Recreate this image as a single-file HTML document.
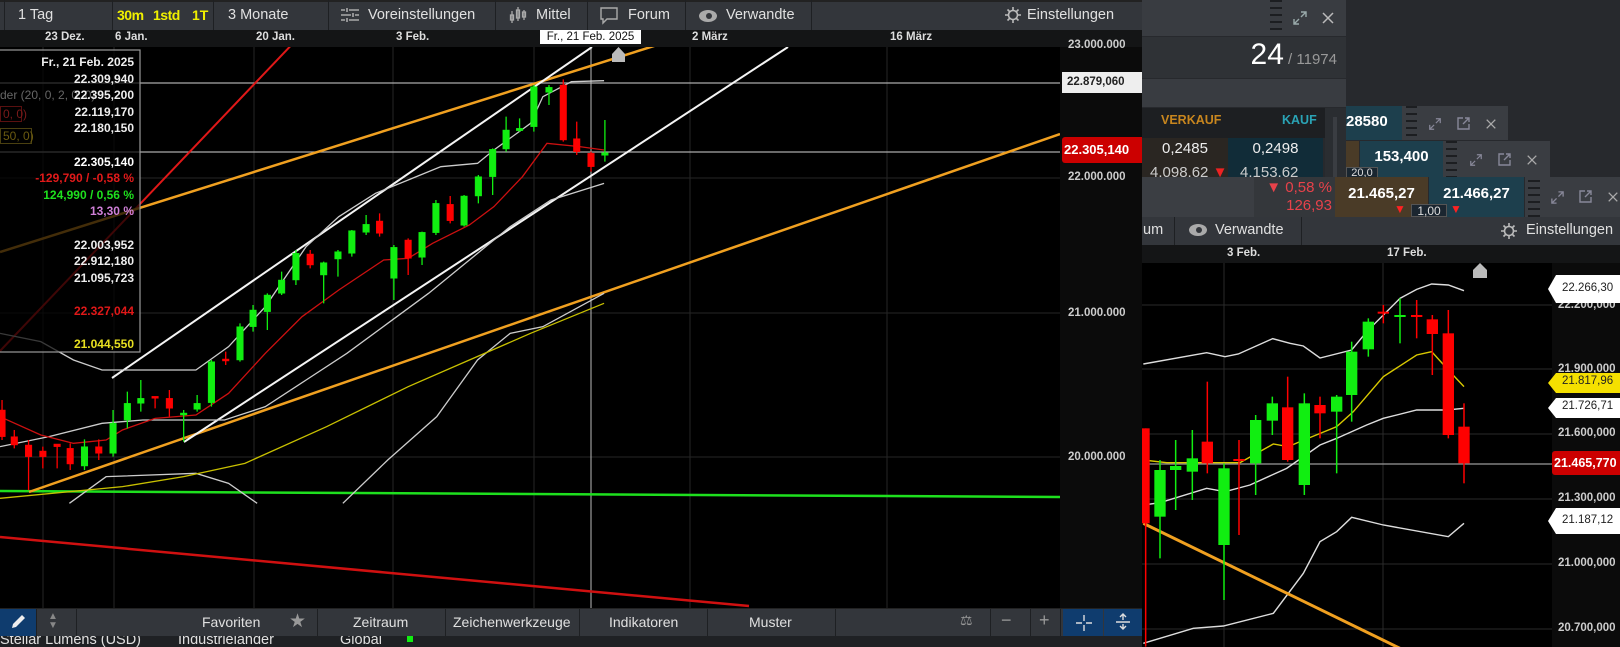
<!DOCTYPE html>
<html><head><meta charset="utf-8"><style>
*{margin:0;padding:0;box-sizing:border-box}
body{width:1620px;height:647px;overflow:hidden;background:#27292d;font-family:"Liberation Sans",Arial,sans-serif;position:relative;color:#ddd}
.a{position:absolute;white-space:nowrap}
.tb{background:#33363b}
.sep{position:absolute;top:0;width:1px;background:#1e2023}
.t14{font-size:14.5px;color:#e0e0e0}
.lbl{font-size:11.5px;color:#ddd;font-weight:bold}
</style></head><body>

<!-- ===== Right background panels ===== -->
<div class="a" style="left:1142px;top:0;width:204px;height:36px;background:#393c41"></div>
<div class="a" style="left:1270px;top:0;width:12px;height:30px;background:repeating-linear-gradient(#1c1e21 0 2px,#393c41 2px 7px)"></div>
<svg class="a" style="left:1292px;top:10px" width="16" height="16" viewBox="0 0 16 16" fill="none" stroke="#9aa" stroke-width="1.4"><path d="M9 2h5v5M14 2l-5 5M7 14H2V9M2 14l5-5"/></svg>
<svg class="a" style="left:1321px;top:11px" width="14" height="14" viewBox="0 0 14 14" stroke="#bbb" stroke-width="1.5"><path d="M2 2l10 10M12 2L2 12"/></svg>
<div class="a" style="left:1142px;top:37px;width:204px;height:41px;background:#2f3236"></div>
<div class="a" style="left:1205px;top:38px;width:132px;text-align:right;color:#fff"><span style="font-size:30px">24</span><span style="font-size:15px;color:#999"> / 11974</span></div>
<div class="a" style="left:1142px;top:79px;width:204px;height:28px;background:#393c41"></div>
<div class="a" style="left:1142px;top:108px;width:183px;height:30px;background:#1d1f22"></div>
<div class="a" style="left:1161px;top:113px;font-size:12.5px;font-weight:bold;color:#c8861e">VERKAUF</div>
<div class="a" style="left:1282px;top:113px;font-size:12.5px;font-weight:bold;color:#2aa3b5">KAUF</div>
<div class="a" style="left:1325px;top:108px;width:21px;height:70px;background:#2a2d31"></div>
<div class="a" style="left:1333px;top:117px;width:4px;height:60px;background:#3a3d42"></div>
<div class="a" style="left:1142px;top:138px;width:86px;height:40px;background:#2a2622"></div>
<div class="a" style="left:1228px;top:138px;width:95px;height:40px;background:#112c38"></div>
<div class="a" style="left:1142px;top:140px;width:86px;text-align:center;font-size:15px;color:#eee">0,2485</div>
<div class="a" style="left:1228px;top:140px;width:95px;text-align:center;font-size:15px;color:#eee">0,2498</div>
<div class="a" style="left:1150px;top:164px;font-size:15px;color:#ccc">4.098,62 <span style="color:#e22">▼</span></div>
<div class="a" style="left:1240px;top:164px;font-size:15px;color:#ccc">4.153,62</div>

<!-- panel B -->
<div class="a" style="left:1346px;top:106px;width:56px;height:34px;background:#1d3f4d;font-size:15px;font-weight:bold;color:#fff;padding:7px 0 0 0">28580</div>
<div class="a" style="left:1402px;top:106px;width:106px;height:34px;background:#3a3d42"></div>
<div class="a" style="left:1406px;top:106px;width:11px;height:34px;background:repeating-linear-gradient(#1c1e21 0 2px,#3a3d42 2px 7px)"></div>
<svg class="a" style="left:1428px;top:117px" width="14" height="14" viewBox="0 0 16 16" fill="none" stroke="#889" stroke-width="1.4"><path d="M9 2h5v5M14 2l-5 5M7 14H2V9M2 14l5-5"/></svg>
<svg class="a" style="left:1457px;top:117px" width="13" height="13" viewBox="0 0 13 13" fill="none" stroke="#889" stroke-width="1.4"><path d="M6 1H1v11h11V7M8 1h4v4M12 1L6 7"/></svg>
<svg class="a" style="left:1485px;top:118px" width="12" height="12" viewBox="0 0 14 14" stroke="#aaa" stroke-width="1.5"><path d="M2 2l10 10M12 2L2 12"/></svg>
<!-- panel C -->
<div class="a" style="left:1346px;top:141px;width:13px;height:36px;background:#4a3b27"></div>
<div class="a" style="left:1360px;top:141px;width:83px;height:36px;background:#1d3f4d;font-size:15px;font-weight:bold;color:#fff;text-align:center;padding-top:7px">153,400</div>
<div class="a" style="left:1346px;top:167px;width:32px;height:11px;background:#1a2630;border:1px solid #555;font-size:11px;line-height:11px;color:#ddd;text-align:center;overflow:hidden">20,0</div>
<div class="a" style="left:1443px;top:141px;width:107px;height:36px;background:#3a3d42"></div>
<div class="a" style="left:1446px;top:141px;width:11px;height:36px;background:repeating-linear-gradient(#1c1e21 0 2px,#3a3d42 2px 7px)"></div>
<svg class="a" style="left:1469px;top:153px" width="14" height="14" viewBox="0 0 16 16" fill="none" stroke="#889" stroke-width="1.4"><path d="M9 2h5v5M14 2l-5 5M7 14H2V9M2 14l5-5"/></svg>
<svg class="a" style="left:1498px;top:153px" width="13" height="13" viewBox="0 0 13 13" fill="none" stroke="#889" stroke-width="1.4"><path d="M6 1H1v11h11V7M8 1h4v4M12 1L6 7"/></svg>
<svg class="a" style="left:1526px;top:154px" width="12" height="12" viewBox="0 0 14 14" stroke="#aaa" stroke-width="1.5"><path d="M2 2l10 10M12 2L2 12"/></svg>
<!-- panel D -->
<div class="a" style="left:1142px;top:177px;width:112px;height:40px;background:#3b3e43"></div>
<div class="a" style="left:1254px;top:177px;width:81px;height:40px;background:#34373b"></div>
<div class="a" style="left:1256px;top:179px;width:76px;text-align:right;font-size:15px;color:#e8424a;line-height:18px">▼ 0,58 %<br>126,93</div>
<div class="a" style="left:1335px;top:177px;width:93px;height:40px;background:#4a3b27;font-size:15px;font-weight:bold;color:#fff;text-align:center;padding-top:8px">21.465,27</div>
<div class="a" style="left:1429px;top:177px;width:95px;height:40px;background:#1d3f4d;font-size:15px;font-weight:bold;color:#fff;text-align:center;padding-top:8px">21.466,27</div>
<div class="a" style="left:1394px;top:202px;color:#f22;font-size:12px">▼</div>
<div class="a" style="left:1450px;top:202px;color:#f22;font-size:12px">▼</div>
<div class="a" style="left:1411px;top:204px;width:36px;height:13px;background:#1b2630;border:1px solid #555;font-size:12px;line-height:12px;color:#ddd;text-align:center">1,00</div>
<div class="a" style="left:1525px;top:177px;width:95px;height:40px;background:#3a3d42"></div>
<div class="a" style="left:1528px;top:180px;width:12px;height:37px;background:repeating-linear-gradient(#1c1e21 0 2px,#3a3d42 2px 7px)"></div>
<svg class="a" style="left:1550px;top:190px" width="15" height="15" viewBox="0 0 16 16" fill="none" stroke="#889" stroke-width="1.4"><path d="M9 2h5v5M14 2l-5 5M7 14H2V9M2 14l5-5"/></svg>
<svg class="a" style="left:1579px;top:190px" width="13" height="13" viewBox="0 0 13 13" fill="none" stroke="#889" stroke-width="1.4"><path d="M6 1H1v11h11V7M8 1h4v4M12 1L6 7"/></svg>
<svg class="a" style="left:1607px;top:191px" width="12" height="12" viewBox="0 0 14 14" stroke="#aaa" stroke-width="1.5"><path d="M2 2l10 10M12 2L2 12"/></svg>

<!-- second chart toolbar -->
<div class="a tb" style="left:1142px;top:217px;width:478px;height:28px"></div>
<div class="sep" style="left:1174px;top:217px;height:28px"></div>
<div class="sep" style="left:1301px;top:217px;height:28px"></div>
<div class="a t14" style="left:1143px;top:222px">um</div>
<svg class="a" style="left:1188px;top:223px" width="20" height="14" viewBox="0 0 20 14"><ellipse cx="10" cy="7" rx="9" ry="6" fill="#aaa"/><circle cx="11" cy="7" r="3" fill="#33363b"/></svg>
<div class="a t14" style="left:1215px;top:222px">Verwandte</div>
<svg class="a" style="left:1500px;top:222px" width="18" height="18" viewBox="0 0 18 18" fill="none" stroke="#bbb" stroke-width="1.6"><circle cx="9" cy="9" r="4.5"/><path d="M9 1v3M9 14v3M1 9h3M14 9h3M3.5 3.5l2 2M12.5 12.5l2 2M3.5 14.5l2-2M12.5 5.5l2-2"/></svg>
<div class="a t14" style="left:1526px;top:222px">Einstellungen</div>
<!-- second chart date axis -->
<div class="a" style="left:1142px;top:245px;width:478px;height:18px;background:#141516"></div>
<div class="a lbl" style="left:1227px;top:247px">3 Feb.</div>
<div class="a lbl" style="left:1387px;top:247px">17 Feb.</div>
<div class="a" style="left:1142px;top:263px;width:410px;height:384px;background:#000"></div>
<div class="a" style="left:1552px;top:263px;width:68px;height:384px;background:#0b0b0b"></div>

<svg class="a" style="left:0;top:0" width="1620" height="647">
<defs><clipPath id="c2"><rect x="1142" y="263" width="410" height="384"/></clipPath></defs>
<g clip-path="url(#c2)">
<g stroke="#2a2a2a" stroke-width="1">
<path d="M1224 263V647M1383 263V647M1142 305H1552M1142 369H1552M1142 434H1552M1142 499H1552M1142 564H1552M1142 629H1552"/></g>
<path d="M1142 464H1552" stroke="#999" stroke-width="1.3"/>
<g transform="translate(1100,230) scale(0.33333)" fill="none" stroke-width="1.4" vector-effect="non-scaling-stroke">
<polyline vector-effect="non-scaling-stroke" stroke="#ddd" points="130,402 320,368 375,380 415,372 518,326 570,340 610,348 660,384 755,360 800,305 900,205 950,178 995,162 1045,165 1092,182"/>
<polyline vector-effect="non-scaling-stroke" stroke="#ddd" points="130,825 180,818 320,775 375,785 450,765 560,715 660,645 710,625 800,585 850,565 950,540 1040,540 1092,535"/>
<polyline vector-effect="non-scaling-stroke" stroke="#ddd" points="130,1240 280,1195 370,1188 520,1150 610,1030 660,935 710,905 755,862 850,885 1045,920 1092,880"/>
<polyline vector-effect="non-scaling-stroke" stroke="#d8c800" points="130,690 200,698 420,698 520,642 565,650 600,635 710,590 760,545 850,440 950,375 995,365 1045,420 1092,470"/>
<line vector-effect="non-scaling-stroke" stroke="#f0a020" stroke-width="3" x1="130" y1="880" x2="900" y2="1255"/>
</g>
<g transform="translate(1100,230) scale(0.33333)">
<g stroke-width="1.5">
<line vector-effect="non-scaling-stroke" stroke="#f00" x1="137" y1="595" x2="137" y2="1250"/><rect x="125" y="595" width="24" height="285" fill="#f00"/>
<line vector-effect="non-scaling-stroke" stroke="#1e1" x1="180" y1="690" x2="180" y2="985"/><rect x="163" y="720" width="34" height="140" fill="#1e1"/>
<line vector-effect="non-scaling-stroke" stroke="#1e1" x1="227" y1="630" x2="227" y2="840"/><rect x="210" y="708" width="34" height="12" fill="#1e1"/>
<line vector-effect="non-scaling-stroke" stroke="#1e1" x1="277" y1="600" x2="277" y2="810"/><rect x="260" y="685" width="34" height="40" fill="#1e1"/>
<line vector-effect="non-scaling-stroke" stroke="#f00" x1="322" y1="455" x2="322" y2="730"/><rect x="305" y="635" width="34" height="65" fill="#f00"/>
<line vector-effect="non-scaling-stroke" stroke="#1e1" x1="372" y1="700" x2="372" y2="1110"/><rect x="355" y="715" width="34" height="230" fill="#1e1"/>
<line vector-effect="non-scaling-stroke" stroke="#f00" x1="417" y1="630" x2="417" y2="915"/><rect x="400" y="687" width="34" height="6" fill="#f00"/>
<line vector-effect="non-scaling-stroke" stroke="#1e1" x1="467" y1="555" x2="467" y2="795"/><rect x="450" y="570" width="34" height="130" fill="#1e1"/>
<line vector-effect="non-scaling-stroke" stroke="#1e1" x1="517" y1="500" x2="517" y2="615"/><rect x="500" y="520" width="34" height="52" fill="#1e1"/>
<line vector-effect="non-scaling-stroke" stroke="#f00" x1="563" y1="440" x2="563" y2="695"/><rect x="546" y="532" width="34" height="158" fill="#f00"/>
<line vector-effect="non-scaling-stroke" stroke="#1e1" x1="613" y1="490" x2="613" y2="795"/><rect x="596" y="520" width="34" height="245" fill="#1e1"/>
<line vector-effect="non-scaling-stroke" stroke="#f00" x1="660" y1="500" x2="660" y2="625"/><rect x="643" y="525" width="34" height="25" fill="#f00"/>
<line vector-effect="non-scaling-stroke" stroke="#1e1" x1="710" y1="495" x2="710" y2="730"/><rect x="693" y="500" width="34" height="45" fill="#1e1"/>
<line vector-effect="non-scaling-stroke" stroke="#1e1" x1="755" y1="335" x2="755" y2="575"/><rect x="738" y="365" width="34" height="130" fill="#1e1"/>
<line vector-effect="non-scaling-stroke" stroke="#1e1" x1="805" y1="265" x2="805" y2="380"/><rect x="788" y="275" width="34" height="83" fill="#1e1"/>
<line vector-effect="non-scaling-stroke" stroke="#f00" x1="850" y1="225" x2="850" y2="280"/><rect x="833" y="245" width="34" height="6" fill="#f00"/>
<line vector-effect="non-scaling-stroke" stroke="#1e1" x1="900" y1="205" x2="900" y2="340"/><rect x="883" y="255" width="34" height="6" fill="#1e1"/>
<line vector-effect="non-scaling-stroke" stroke="#f00" x1="950" y1="210" x2="950" y2="325"/><rect x="933" y="255" width="34" height="6" fill="#f00"/>
<line vector-effect="non-scaling-stroke" stroke="#f00" x1="997" y1="255" x2="997" y2="435"/><rect x="980" y="268" width="34" height="44" fill="#f00"/>
<line vector-effect="non-scaling-stroke" stroke="#f00" x1="1045" y1="240" x2="1045" y2="625"/><rect x="1028" y="310" width="34" height="305" fill="#f00"/>
<line vector-effect="non-scaling-stroke" stroke="#f00" x1="1092" y1="520" x2="1092" y2="760"/><rect x="1075" y="590" width="34" height="110" fill="#f00"/>
</g></g>
<path d="M1473 278V270L1480 263L1487 270V278Z" fill="#bbb"/>
</g>
</svg>
<!-- right axis labels of second chart -->
<div class="a lbl" style="left:1558px;top:299px;color:#ccc">22.200,000</div>
<div class="a lbl" style="left:1558px;top:363px;color:#ccc">21.900,000</div>
<div class="a lbl" style="left:1558px;top:427px;color:#ccc">21.600,000</div>
<div class="a lbl" style="left:1558px;top:492px;color:#ccc">21.300,000</div>
<div class="a lbl" style="left:1558px;top:557px;color:#ccc">21.000,000</div>
<div class="a lbl" style="left:1558px;top:622px;color:#ccc">20.700,000</div>
<svg class="a" style="left:1548px;top:275px" width="72" height="260">
<path d="M0 14L8 0H72V28H8Z" fill="#fff"/>
<path d="M0 108L8 98H72V118H8Z" fill="#f5e000"/>
<path d="M0 133L8 123H72V143H8Z" fill="#fff"/>
<path d="M0 246L8 233H72V259H8Z" fill="#fff"/>
</svg>
<div class="a lbl" style="left:1562px;top:282px;color:#222;font-weight:normal">22.266,30</div>
<div class="a lbl" style="left:1562px;top:375px;color:#222;font-weight:normal">21.817,96</div>
<div class="a lbl" style="left:1562px;top:400px;color:#222;font-weight:normal">21.726,71</div>
<div class="a" style="left:1552px;top:451px;width:68px;height:24px;background:#c00;border-radius:3px 0 0 3px"></div>
<div class="a" style="left:1554px;top:456px;font-size:12.5px;font-weight:bold;color:#fff">21.465,770</div>
<div class="a lbl" style="left:1562px;top:514px;color:#222;font-weight:normal">21.187,12</div>

<!-- ===== Main window ===== -->
<div class="a tb" style="left:0;top:0;width:1142px;height:30px;border-top:2px solid #222"></div>
<div class="sep" style="left:4px;height:30px"></div>
<div class="sep" style="left:112px;height:30px"></div>
<div class="sep" style="left:213px;height:30px"></div>
<div class="sep" style="left:328px;height:30px"></div>
<div class="sep" style="left:495px;height:30px"></div>
<div class="sep" style="left:587px;height:30px"></div>
<div class="sep" style="left:685px;height:30px"></div>
<div class="sep" style="left:811px;height:30px"></div>
<div class="a t14" style="left:18px;top:7px">1 Tag</div>
<div class="a" style="left:117px;top:7px;font-size:14px;font-weight:bold;color:#f0f000;letter-spacing:-0.5px">30m</div>
<div class="a" style="left:153px;top:7px;font-size:14px;font-weight:bold;color:#f0f000;letter-spacing:-0.5px">1std</div>
<div class="a" style="left:192px;top:7px;font-size:14px;font-weight:bold;color:#f0f000">1T</div>
<div class="a t14" style="left:228px;top:7px">3 Monate</div>
<svg class="a" style="left:341px;top:7px" width="18" height="16" viewBox="0 0 18 16" stroke="#aaa" stroke-width="1.6"><path d="M0 3h4M8 3h10M0 8h10M14 8h4M0 13h4M8 13h10M6 1v4M12 6v4M6 11v4"/></svg>
<div class="a t14" style="left:368px;top:7px">Voreinstellungen</div>
<svg class="a" style="left:509px;top:5px" width="18" height="20" viewBox="0 0 18 20" fill="none" stroke="#aaa" stroke-width="1.3"><path d="M3 6v12M9 2v14M15 5v10"/><rect x="1.5" y="10" width="3" height="5"/><rect x="7.5" y="5" width="3" height="8"/><rect x="13.5" y="7" width="3" height="5"/></svg>
<div class="a t14" style="left:536px;top:7px">Mittel</div>
<svg class="a" style="left:600px;top:7px" width="18" height="18" viewBox="0 0 18 18" fill="none" stroke="#aaa" stroke-width="1.4"><path d="M1 1h16v11H7l-4 4v-4H1z"/></svg>
<div class="a t14" style="left:628px;top:7px">Forum</div>
<svg class="a" style="left:698px;top:9px" width="20" height="14" viewBox="0 0 20 14"><ellipse cx="10" cy="7" rx="9" ry="6" fill="#aaa"/><circle cx="11" cy="7" r="3" fill="#33363b"/></svg>
<div class="a t14" style="left:726px;top:7px">Verwandte</div>
<svg class="a" style="left:1004px;top:6px" width="18" height="18" viewBox="0 0 18 18" fill="none" stroke="#bbb" stroke-width="1.6"><circle cx="9" cy="9" r="4.5"/><path d="M9 1v3M9 14v3M1 9h3M14 9h3M3.5 3.5l2 2M12.5 12.5l2 2M3.5 14.5l2-2M12.5 5.5l2-2"/></svg>
<div class="a t14" style="left:1027px;top:7px">Einstellungen</div>

<div class="a" style="left:0;top:30px;width:1142px;height:17px;background:#141516"></div>
<div class="a" style="left:0;top:47px;width:1060px;height:561px;background:#000"></div>
<div class="a" style="left:1060px;top:47px;width:82px;height:561px;background:#0b0b0b"></div>

<svg class="a" style="left:0;top:0" width="1142" height="610">
<defs><clipPath id="c1"><rect x="0" y="47" width="1060" height="561"/></clipPath></defs>
<g clip-path="url(#c1)">
<g stroke="#262626" stroke-width="1"><path d="M43 47V608M114 47V608M254 47V608M393 47V608M534 47V608M690 47V608M887 47V608M0 178H1060M0 313H1060M0 457H1060"/></g>
<path d="M0 83H1060M0 152H1060" stroke="#aaa" stroke-width="1.2"/>
<path d="M591 30V608" stroke="#bbb" stroke-width="1"/>
<line x1="0" y1="491" x2="1060" y2="497" stroke="#1ee01e" stroke-width="2.5"/>
<line x1="0" y1="537" x2="749" y2="606" stroke="#d01010" stroke-width="2.5"/>
<line x1="0" y1="351" x2="300" y2="36" stroke="#e01818" stroke-width="2"/>
<line x1="0" y1="252" x2="800" y2="0" stroke="#f0a020" stroke-width="2.5"/>
<line x1="29" y1="492" x2="1060" y2="134" stroke="#f0a020" stroke-width="2.5"/>
<line x1="112" y1="378" x2="592" y2="47" stroke="#f4f4f4" stroke-width="2"/>
<line x1="184" y1="442" x2="788" y2="47" stroke="#f4f4f4" stroke-width="2"/>
<g transform="translate(0,40) scale(0.40816,0.33333)" fill="none">
<polyline vector-effect="non-scaling-stroke" stroke="#ccc" stroke-width="1.3" points="0,880 100,905 180,960 250,990 480,990 560,920 650,800 750,620 830,530 920,460 1000,420 1080,380 1170,370 1210,330 1300,250 1330,170 1400,125 1480,122"/>
<polyline vector-effect="non-scaling-stroke" stroke="#ccc" stroke-width="1.3" points="0,1220 120,1190 250,1150 350,1140 550,1140 650,1100 750,1020 850,940 950,850 1050,760 1150,660 1250,560 1350,480 1480,430"/>
<polyline vector-effect="non-scaling-stroke" stroke="#ccc" stroke-width="1.3" points="170,1390 260,1310 480,1300 560,1330 630,1390"/>
<polyline vector-effect="non-scaling-stroke" stroke="#ccc" stroke-width="1.3" points="840,1390 950,1260 1070,1130 1170,960 1250,880 1330,860 1480,760"/>
<polyline vector-effect="non-scaling-stroke" stroke="#cc1010" stroke-width="1.3" points="0,1130 100,1185 180,1210 260,1200 300,1170 380,1135 480,1125 560,1060 650,940 740,830 830,750 940,660 1000,655 1060,610 1150,555 1210,500 1280,410 1340,310 1420,320 1480,330"/>
<polyline vector-effect="non-scaling-stroke" stroke="#c8c000" stroke-width="1.3" points="0,1375 300,1340 450,1310 600,1270 800,1160 1000,1040 1150,960 1300,880 1480,790"/>
</g>
<g transform="translate(0,40) scale(0.40816,0.33333)" stroke-width="1.3">
<g stroke="#f00" fill="#f00">
<path vector-effect="non-scaling-stroke" d="M5 1080V1200M35 1170V1225M70 1200V1350M105 1220V1285M140 1213V1285M172 1210V1290M242 1198V1260M380 1070V1105M415 1050V1130M553 935V975M760 630V685M930 520V590M1000 595V705M1103 468V550M1380 118V305M1413 245V345M1448 335V395"/>
<rect x="-3" y="1110" width="16" height="80"/><rect x="27" y="1190" width="16" height="25"/><rect x="62" y="1215" width="16" height="35"/><rect x="97" y="1233" width="16" height="17"/><rect x="132" y="1212" width="16" height="8"/><rect x="164" y="1225" width="16" height="47"/><rect x="234" y="1220" width="16" height="20"/><rect x="372" y="1069" width="16" height="6"/><rect x="407" y="1075" width="16" height="30"/><rect x="545" y="957" width="16" height="6"/><rect x="752" y="642" width="16" height="33"/><rect x="922" y="543" width="16" height="37"/><rect x="992" y="600" width="16" height="55"/><rect x="1095" y="493" width="16" height="49"/><rect x="1372" y="135" width="16" height="165"/><rect x="1405" y="296" width="16" height="39"/><rect x="1440" y="340" width="16" height="40"/>
</g>
<g stroke="#1e1" fill="#1e1">
<path vector-effect="non-scaling-stroke" d="M207 1198V1290M277 1110V1250M312 1055V1165M345 1020V1115M450 1110V1205M483 1065V1115M518 960V1100M588 850V965M620 795V875M655 760V870M690 695V765M725 630V735M793 665V790M828 630V710M862 570V650M897 525V585M965 615V780M1034 575V675M1068 480V585M1137 465V560M1172 405V490M1207 325V465M1240 230V335M1273 235V275M1308 135V275M1345 135V195M1482 240V365"/>
<rect x="199" y="1220" width="16" height="58"/><rect x="269" y="1150" width="16" height="90"/><rect x="304" y="1090" width="16" height="50"/><rect x="337" y="1075" width="16" height="15"/><rect x="442" y="1119" width="16" height="6"/><rect x="475" y="1090" width="16" height="18"/><rect x="510" y="965" width="16" height="123"/><rect x="580" y="860" width="16" height="100"/><rect x="612" y="810" width="16" height="50"/><rect x="647" y="765" width="16" height="50"/><rect x="682" y="720" width="16" height="40"/><rect x="717" y="640" width="16" height="80"/><rect x="785" y="668" width="16" height="37"/><rect x="820" y="635" width="16" height="22"/><rect x="854" y="572" width="16" height="68"/><rect x="889" y="553" width="16" height="24"/><rect x="957" y="622" width="16" height="93"/><rect x="1026" y="577" width="16" height="75"/><rect x="1060" y="490" width="16" height="88"/><rect x="1129" y="468" width="16" height="88"/><rect x="1164" y="410" width="16" height="58"/><rect x="1199" y="328" width="16" height="82"/><rect x="1232" y="270" width="16" height="57"/><rect x="1265" y="265" width="16" height="7"/><rect x="1300" y="140" width="16" height="120"/><rect x="1337" y="142" width="16" height="15"/><rect x="1474" y="338" width="16" height="8"/>
</g></g>
<path d="M612 62V54L618.5 47L625 54V62Z" fill="#bbb"/>
<!-- info box -->
<rect x="-1" y="50" width="141" height="302" fill="rgba(0,0,0,0.72)" stroke="#999" stroke-width="1.2"/>
</g>
</svg>
<!-- date labels -->
<div class="a lbl" style="left:45px;top:31px">23 Dez.</div>
<div class="a lbl" style="left:115px;top:31px">6 Jan.</div>
<div class="a lbl" style="left:256px;top:31px">20 Jan.</div>
<div class="a lbl" style="left:396px;top:31px">3 Feb.</div>
<div class="a lbl" style="left:692px;top:31px">2 März</div>
<div class="a lbl" style="left:890px;top:31px">16 März</div>
<div class="a" style="left:540px;top:30px;width:101px;height:14px;background:#fff;color:#111;font-size:11.5px;line-height:14px;text-align:center">Fr., 21 Feb. 2025</div>
<!-- main axis -->
<div class="a lbl" style="left:1068px;top:39px;color:#ccc">23.000.000</div>
<div class="a" style="left:1062px;top:72px;width:80px;height:21px;background:#eee"></div>
<div class="a lbl" style="left:1067px;top:76px;color:#222">22.879,060</div>
<div class="a" style="left:1062px;top:137px;width:80px;height:26px;background:#c00;border-radius:3px 0 0 3px"></div>
<div class="a" style="left:1064px;top:142px;font-size:13px;font-weight:bold;color:#fff">22.305,140</div>
<div class="a lbl" style="left:1068px;top:171px;color:#ccc">22.000.000</div>
<div class="a lbl" style="left:1068px;top:307px;color:#ccc">21.000.000</div>
<div class="a lbl" style="left:1068px;top:451px;color:#ccc">20.000.000</div>
<!-- info box text -->
<div class="a" style="left:0;top:88px;font-size:12px;color:#666">der (20, 0, 2, 0, 0)</div>
<div class="a" style="left:0;top:106px;width:22px;height:16px;border:1px solid #5a1010;font-size:12px;color:#7a1a1a;padding-left:2px">0, 0)</div>
<div class="a" style="left:0;top:128px;width:32px;height:16px;border:1px solid #4a4010;font-size:12px;color:#6a5a10;padding-left:2px">50, 0)</div>
<div class="a" style="left:0;top:54px;width:134px;text-align:right;font-size:12px;font-weight:bold;line-height:16.6px;color:#eee">
Fr., 21 Feb. 2025<br>22.309,940<br>22.395,200<br>22.119,170<br>22.180,150<br><br><span style="color:#fff">22.305,140</span><br><span style="color:#e21a1a">-129,790 / -0,58 %</span><br><span style="color:#1ee01e">124,990 / 0,56 %</span><br><span style="color:#d080d8">13,30 %</span><br><br>22.003,952<br>22.912,180<br>21.095,723<br><br><span style="color:#e01818">22.327,044</span><br><br><span style="color:#e8e020">21.044,550</span></div>

<!-- bottom toolbar -->
<div class="a tb" style="left:0;top:608px;width:1142px;height:28px;border-top:1px solid #222"></div>
<div class="a" style="left:0;top:609px;width:36px;height:27px;background:#0f3c6e"></div>
<svg class="a" style="left:9px;top:613px" width="18" height="18" viewBox="0 0 18 18"><path d="M3 15l1-4L13 2l3 3-9 9z" fill="#eee"/></svg>
<div class="a" style="left:48px;top:612px;color:#888;font-size:10px;line-height:9px">▲<br>▼</div>
<div class="sep" style="left:36px;top:609px;height:27px"></div>
<div class="sep" style="left:76px;top:609px;height:27px"></div>
<div class="sep" style="left:317px;top:609px;height:27px"></div>
<div class="sep" style="left:445px;top:609px;height:27px"></div>
<div class="sep" style="left:579px;top:609px;height:27px"></div>
<div class="sep" style="left:707px;top:609px;height:27px"></div>
<div class="sep" style="left:835px;top:609px;height:27px"></div>
<div class="sep" style="left:990px;top:609px;height:27px"></div>
<div class="sep" style="left:1030px;top:609px;height:27px"></div>
<div class="sep" style="left:1060px;top:609px;height:27px"></div>
<div class="a t14" style="left:202px;top:614px;font-size:14px">Favoriten</div>
<div class="a" style="left:289px;top:610px;color:#999;font-size:19px">★</div>
<div class="a t14" style="left:353px;top:614px;font-size:14px">Zeitraum</div>
<div class="a t14" style="left:453px;top:614px;font-size:14px">Zeichenwerkzeuge</div>
<div class="a t14" style="left:609px;top:614px;font-size:14px">Indikatoren</div>
<div class="a t14" style="left:749px;top:614px;font-size:14px">Muster</div>
<div class="a" style="left:960px;top:612px;color:#999;font-size:14px">⚖</div>
<div class="a" style="left:1001px;top:610px;color:#999;font-size:18px">−</div>
<div class="a" style="left:1039px;top:610px;color:#999;font-size:18px">+</div>
<div class="a" style="left:1063px;top:609px;width:40px;height:27px;background:#0f3c6e"></div>
<div class="a" style="left:1104px;top:609px;width:38px;height:27px;background:#0f3c6e"></div>
<svg class="a" style="left:1075px;top:614px" width="18" height="18" viewBox="0 0 18 18" stroke="#ddd" stroke-width="1.4"><path d="M9 1v6M9 11v6M1 9h6M11 9h6"/></svg>
<svg class="a" style="left:1114px;top:613px" width="18" height="18" viewBox="0 0 18 18" stroke="#ddd" stroke-width="1.4" fill="none"><path d="M2 9h14M9 2v5M6 4l3-3 3 3M9 11v5M6 13l3 3 3-3"/></svg>
<!-- bottom strip -->
<div class="a" style="left:0;top:636px;width:1142px;height:11px;background:#1f2124;overflow:hidden">
<div class="a t14" style="left:0;top:-4px">Stellar Lumens (USD)</div>
<div class="a t14" style="left:178px;top:-4px">Industrieländer</div>
<div class="a t14" style="left:340px;top:-4px">Global</div>
<div class="a" style="left:407px;top:0;width:6px;height:6px;background:#1e1"></div>
</div>
</body></html>
